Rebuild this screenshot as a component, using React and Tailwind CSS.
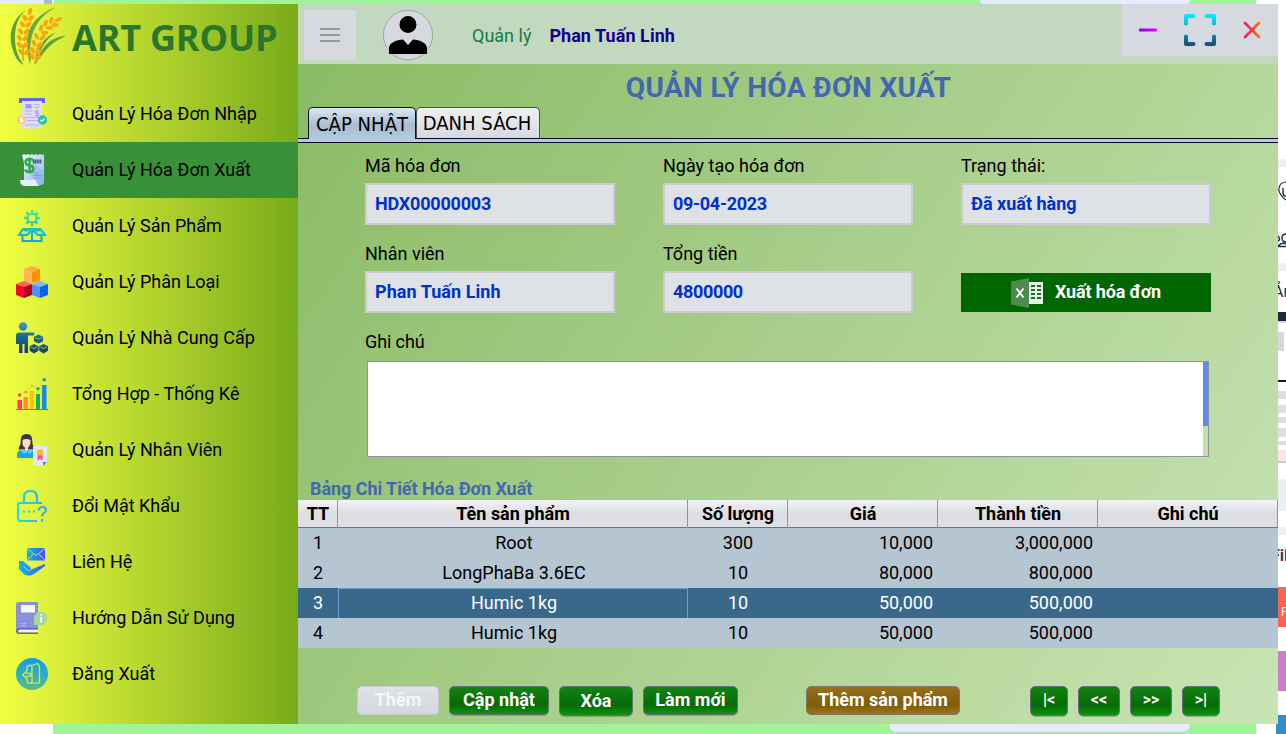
import React from 'react';

function Logo() {
  const ear = (pts, rot) =>
    pts.map(([x, y], i) => (
      <g key={i} transform={`translate(${x} ${y}) rotate(${rot})`} fill="#fca30f">
        <ellipse cx="-3" cy="0" rx="2" ry="3.5" transform="rotate(-38 -3 0)" />
        <ellipse cx="3" cy="0" rx="2" ry="3.5" transform="rotate(38 3 0)" />
      </g>
    ));
  return (
    <svg width="58" height="60" viewBox="0 0 58 60" className="shrink-0">
      <path d="M16 4C3 12-3 28 3 44c2 7 5 12 11 15C7 50 5 42 5 31 5 20 8 11 16 4Z" fill="#5f9e3c" />
      <path d="M46 1C28 8 17 20 17 37c0 8 1 14 3 21 2-8-1-14 1-23C23 21 31 9 46 1Z" fill="#6fa644" />
      <path d="M46 26C35 31 26 41 25 58c4-13 10-24 21-32Z" fill="#5f9e3c" />
      <path d="M56 30C40 31 31 41 26 58c8-13 15-22 30-28Z" fill="#5f9e3c" />
      <path d="M13 38v17" stroke="#e58b1b" strokeWidth="1.3" />
      <path d="M28 38l-3 20" stroke="#e58b1b" strokeWidth="1.3" />
      {ear([[18, 12], [15.5, 18.5], [13.5, 25.5], [12.5, 32], [12.5, 39], [14, 46]], 2)}
      <ellipse cx="20" cy="5.500" rx="2" ry="3.7" transform="rotate(14 20 5.500)" fill="#fca30f" />
      {ear([[43, 16.5], [37.5, 19.5], [33, 24.5]], 52)}
      {ear([[29.5, 31], [27, 38], [26, 45], [25, 51]], 14)}
      <ellipse cx="48.500" cy="13.500" rx="2" ry="3.7" transform="rotate(68 48.500 13.500)" fill="#fca30f" />
    </svg>
  );
}

const icons = {
  importBill: (
    <>
      <path d="M3 0h26v5H3z" fill="#6563f0" />
      <path d="M6 3h20v28l-2-1.500-2 1.500-2-1.500-2 1.500-2-1.500-2 1.500-2-1.500-2 1.500-2-1.500-2 1z" fill="#dedcfb" />
      <path d="M9.500 6h6v4.500h-6z" fill="#a59cf5" />
      <path d="M18 6.500h5M18 9.500h5M9 13h7M9 16h7M9 19.500h14M11 22.500h11M9 27h14" stroke="#b7b0f7" strokeWidth="1" />
      <path d="M22.500 13h-3v2h3v2.500h-3.500M21 12v7" stroke="#a59cf5" fill="none" />
      <circle cx="5.500" cy="22" r="4.500" fill="#fdc98a" />
      <path d="M7 20.300H4.500V22h2.300v1.700H4M5.600 19.500v5" stroke="#fff" fill="none" />
      <circle cx="26.500" cy="22" r="4.700" fill="#2ec4a2" />
      <path d="M24.500 22l1.500 1.300 2.500-2.300" stroke="#fff" strokeWidth="1.200" fill="none" />
    </>
  ),
  exportBill: (
    <>
      <defs>
        <linearGradient id="paper" x1="0" y1="0" x2="1" y2="1">
          <stop offset="0" stopColor="#eef4fd" /><stop offset="1" stopColor="#93b8ee" />
        </linearGradient>
      </defs>
      <path d="M6 1l2-1 2 1 2-1 2 1 2-1 2 1 2-1 2 1 2-1 2 1 2-1v28q0 3-4 3H8V9z" fill="url(#paper)" />
      <path d="M12 18l11 12h5V18L17 7z" fill="#86aef0" opacity=".45" />
      <path d="M4 26h16q0 5 4 6H8q-4-1-4-6z" fill="#e5eefb" />
      <path d="M17 7.500h9" stroke="#39456b" strokeWidth="4" strokeDasharray="1.200 .6" />
      <path d="M17.500 7q-1-2-4-2-4 0-4 3t4 3.500 4 3.500-4 3q-3.500 0-4.500-2.500M13.500 3.500v16" stroke="#31a844" strokeWidth="2.400" fill="none" />
      <path d="M18 19h5M18 21.500h8M18 24h7" stroke="#6e91dc" strokeWidth=".8" />
    </>
  ),
  product: (
    <>
      <defs>
        <linearGradient id="prod" x1="0" y1="0" x2="0" y2="32" gradientUnits="userSpaceOnUse">
          <stop offset="0" stopColor="#2ee8a0" /><stop offset=".6" stopColor="#17bfc9" /><stop offset="1" stopColor="#0fa5ec" />
        </linearGradient>
      </defs>
      <g stroke="url(#prod)" fill="none">
        <circle cx="16" cy="8" r="4.600" strokeWidth="2" />
        <circle cx="16" cy="8" r="6.600" strokeWidth="2.600" strokeDasharray="2.400 2.784" strokeDashoffset="1.200" />
        <path d="M7 19h17.500l4.500 6h-7l-5.500-5-5.500 5H3zM6.500 25v6h19v-6M16 20v11" strokeWidth="2.100" />
        <path d="M7.500 20.500l7 .5M24.500 20.500l-7 .5" strokeWidth="1.300" />
      </g>
    </>
  ),
  category: (
    <>
      <path d="M16 0l8 3-8 3.500L8 3z" fill="#ffa944" />
      <path d="M8 3l8 3.500V17l-8-2z" fill="#ffb459" />
      <path d="M24 3l-8 3.500V17l8-2z" fill="#ff8f00" />
      <path d="M8 15l8 3-8 3-8-3z" fill="#ff6166" />
      <path d="M0 18l8 3v11l-8-3z" fill="#ff0226" />
      <path d="M16 18l-8 3v11l8-3z" fill="#b00521" />
      <path d="M24 15l8 3-8 3-8-3z" fill="#84b7ff" />
      <path d="M16 18l8 3v11l-8-3z" fill="#4a90ff" />
      <path d="M32 18l-8 3v11l8-3z" fill="#0864e8" />
    </>
  ),
  supplier: (
    <>
      <defs>
        <linearGradient id="sup" x1="0" y1="0" x2="0" y2="32" gradientUnits="userSpaceOnUse">
          <stop offset="0" stopColor="#3aa0d5" /><stop offset=".5" stopColor="#1d6287" /><stop offset="1" stopColor="#1c3d6b" />
        </linearGradient>
      </defs>
      <g fill="url(#sup)">
        <circle cx="7" cy="4.500" r="4.200" />
        <path d="M3 10.500h14q1.500 0 1.500 1.500t-1.500 1.500h-5V31H8.500V22h-2v9H3V22H0V13.500q0-3 3-3z" />
        <path d="M22.500 12.500l4.500 2.200v4.600l-4.500 2.200-4.500-2.200v-4.600zM18 22l4.500 2.200v4.600L18 31.500l-4.300-2.700v-4.600zM27.500 22l4.500 2.200v4.600l-4.500 2.700-4.300-2.700v-4.600z" />
      </g>
      <path d="M19 15.500l3.500 1.600 3.500-1.600M15 25l3 1.600 3-1.600M24.500 25l3 1.600 3-1.600" stroke="#bfdc3c" strokeWidth=".8" fill="none" />
    </>
  ),
  stats: (
    <>
      <path d="M1.500 22h4.500v9H1.500z" fill="#fb3f5c" />
      <path d="M7.500 19h4.500v12H7.500z" fill="#fd9135" />
      <path d="M13.700 13h4v18h-4z" fill="#fec308" />
      <path d="M20 16h4v15h-4z" fill="#0eb35e" />
      <path d="M26 7h4.500v24H26z" fill="#0f8bf0" />
      <path d="M3.500 17l6.500-3 6-6.500 6 3 6-9" stroke="#b8c9cf" fill="none" strokeWidth=".9" />
      <circle cx="3.500" cy="17" r="1.700" fill="#fb3f5c" /><circle cx="9.800" cy="14" r="1.600" fill="#fd9135" />
      <circle cx="16" cy="8" r="1.600" fill="#fec308" /><circle cx="22" cy="10.700" r="1.600" fill="#0eb35e" />
      <circle cx="28.300" cy="1.700" r="1.700" fill="#0f8bf0" />
      <path d="M0 31.500h32" stroke="#3b8fb5" />
    </>
  ),
  staff: (
    <>
      <path d="M4.500 14C4.500 3 5 0 10.500 0S16.500 3 16.500 14q-6 3-12 0z" fill="#3c3640" />
      <path d="M5 10q-3 3-2 5.500h5zM16 10q3 3 2 5.500h-5z" fill="#3c3640" />
      <path d="M1 24v-4q1-4 6-5h7q5 1 5 5v4z" fill="#18a6e6" />
      <path d="M6.500 6q4-2 8 0v3q-1 4-2.500 4.500V16l-1.500 2L9 16v-2.500Q6.500 12.500 6.500 9z" fill="#fcd9cb" />
      <path d="M4 16l4-1 3 3-3 2zM18 16l-4-1-3 3 3 2z" fill="#5fd0f5" />
      <path d="M17 12h14v16l-4 4H17z" fill="#dfe9fb" />
      <path d="M31 28l-4 4v-4z" fill="#4c8ad8" />
      <path d="M21.500 21h5v5.500l-2.500-1.500-2.500 1.500z" fill="#fc4fa1" />
      <circle cx="24" cy="18.500" r="3.300" fill="#fdb913" />
    </>
  ),
  password: (
    <>
      <defs>
        <linearGradient id="pwd" x1="0" y1="0" x2="32" y2="0" gradientUnits="userSpaceOnUse">
          <stop offset="0" stopColor="#12e6e6" /><stop offset="1" stopColor="#3f9ef5" />
        </linearGradient>
      </defs>
      <g stroke="url(#pwd)" fill="none" strokeWidth="2.200">
        <path d="M8 13V7.500Q8 1 14.500 1T21 7.500V13M26 13H4q-2 0-2 2v13q0 3 3 3h16" />
        <path d="M22.500 20.500q.5-3.500 4-3.500t3.500 3q0 2-2 3t-2 3.500M26 29v2.500" />
        <path d="M7 21.500h2M12 21.500h2M17 21.500h2" />
      </g>
    </>
  ),
  contact: (
    <>
      <defs>
        <linearGradient id="con" x1="0" y1="0" x2="1" y2="0">
          <stop offset="0" stopColor="#08b6fb" /><stop offset="1" stopColor="#4a51fb" />
        </linearGradient>
      </defs>
      <path d="M11 2h18v12.500H11z" fill="url(#con)" />
      <path d="M11 2.500l9 7 9-7M11 14l6.500-6M29 14l-6.500-6" stroke="#d5ea3b" strokeWidth=".9" fill="none" />
      <path d="M3 15h4l7 6q2 2 0 3l15-6v2L18 28q-6 3-10 0l-5-5z" fill="url(#con)" />
      <path d="M7.500 20l5 5 3-1.500" stroke="#d5ea3b" strokeWidth=".9" fill="none" />
    </>
  ),
  guide: (
    <>
      <path d="M2.500 0H22v26H3q-3 0-3 3V3q0-3 2.500-3z" fill="#8a90dc" />
      <path d="M0 29q0-3 3-3h19v1.500H4q-2 0-2 1.700t2 1.300h18V32H3q-3 0-3-3z" fill="#5e63c0" />
      <path d="M3 28h19v2H3z" fill="#f3f1fb" />
      <path d="M5 3h14v7.500H5z" fill="#f7f5fc" />
      <path d="M5 21.500h5M5 23.500h5" stroke="#f0b87a" strokeWidth=".8" />
      <path d="M18 23v-6a6.700 6.700 0 1 1 6 6.200z" fill="#a2d99b" />
      <path d="M25 15v5.500M25 12v1.500" stroke="#fff" strokeWidth="2" />
    </>
  ),
  logout: (
    <>
      <defs>
        <linearGradient id="out" x1="0" y1="0" x2="0" y2="1">
          <stop offset="0" stopColor="#0d9df5" /><stop offset="1" stopColor="#57bd8a" />
        </linearGradient>
      </defs>
      <circle cx="16" cy="16" r="16" fill="url(#out)" />
      <path d="M16 7.500h-3q-2 0-2 2V13M16 25h-3q-2 0-2-2v-2.500" fill="none" stroke="#cfe84a" strokeWidth="1.300" />
      <path d="M16 7.500l5.500-2Q23.500 8 23.500 9v14q0 2.200-2 2.200H16zM6.500 16.700l4-3.400v2h4v2.900h-4v2z" fill="none" stroke="#cfe84a" strokeWidth="1.300" />
    </>
  ),
};

const menu = [
  ['importBill', 'Quản Lý Hóa Đơn Nhập'],
  ['exportBill', 'Quản Lý Hóa Đơn Xuất'],
  ['product', 'Quản Lý Sản Phẩm'],
  ['category', 'Quản Lý Phân Loại'],
  ['supplier', 'Quản Lý Nhà Cung Cấp'],
  ['stats', 'Tổng Hợp - Thống Kê'],
  ['staff', 'Quản Lý Nhân Viên'],
  ['password', 'Đổi Mật Khẩu'],
  ['contact', 'Liên Hệ'],
  ['guide', 'Hướng Dẫn Sử Dụng'],
  ['logout', 'Đăng Xuất'],
];

function Sidebar() {
  return (
    <aside className="flex h-full w-[298px] shrink-0 flex-col bg-linear-to-r from-[#f1ff41] to-[#78ab1a]">
      <div className="flex h-[82px] items-start gap-1 pl-[10px] pt-[2px]">
        <Logo />
        <div className="pt-[7px] font-['Open_Sans',sans-serif] text-[36px] leading-[50px] font-bold tracking-[-0.2px] whitespace-nowrap text-[#2c762b]">ART GROUP</div>
      </div>
      <nav className="flex flex-col">
        {menu.map(([icon, label], i) => (
          <a key={label} className={`flex h-14 items-center gap-6 pl-4 text-[18px] ${i === 1 ? 'bg-[#389137]' : ''}`}>
            <svg width="32" height="32" viewBox="0 0 32 32" className="shrink-0">{icons[icon]}</svg>
            <span className="pb-[2px] whitespace-nowrap">{label}</span>
          </a>
        ))}
      </nav>
    </aside>
  );
}

function Header() {
  return (
    <header className="flex h-[60px] shrink-0 items-start bg-[#c2d9bf]">
      <button className="mt-[6px] ml-[6px] flex h-[50px] w-[52px] items-center justify-center bg-[#d6d9df]">
        <svg width="20" height="14" viewBox="0 0 20 14"><path d="M0 1h20M0 7h20M0 13h20" stroke="#999" strokeWidth="2" /></svg>
      </button>
      <svg width="50" height="50" viewBox="0 0 50 50" className="mt-[6px] ml-[27px]">
        <circle cx="25" cy="25" r="24.600" fill="#d6d9df" stroke="#8d9092" strokeWidth=".7" />
        <circle cx="25" cy="14.500" r="8.500" />
        <path d="M6 44v-6c0-5 8-8.500 14-8.500l5 5.500 5-5.500c6 0 14 3.500 14 8.500v6z" />
      </svg>
      <div className="flex h-[62px] items-center gap-[18px] pl-[39px] text-[18px] whitespace-nowrap">
        <span className="text-[#157c46]">Quản lý</span>
        <span className="font-bold tracking-[0.05px] text-[#150091]">Phan Tuấn Linh</span>
      </div>
      <div className="ml-auto flex h-[52px] w-[156px] items-center bg-[#d6d9df]">
        <svg width="156" height="52" viewBox="0 0 156 52">
          <defs>
            <linearGradient id="min" x1="0" x2="1" y1="0" y2="0"><stop offset="0" stopColor="#7a00fb" /><stop offset="1" stopColor="#f500fb" /></linearGradient>
            <linearGradient id="max" x1="0" x2="0" y1="10" y2="42" gradientUnits="userSpaceOnUse"><stop offset="0" stopColor="#00f2ff" /><stop offset="1" stopColor="#19487a" /></linearGradient>
            <linearGradient id="cls" x1="122" x2="138" y1="0" y2="0" gradientUnits="userSpaceOnUse"><stop offset="0" stopColor="#f0106d" /><stop offset="1" stopColor="#ff7300" /></linearGradient>
          </defs>
          <rect x="17" y="24.500" width="18" height="3" rx="1" fill="url(#min)" />
          <path d="M64 19.500V12h7.500M84.500 12H92v7.500M92 32.500V40h-7.500M71.500 40H64v-7.500" fill="none" stroke="url(#max)" strokeWidth="4" strokeLinecap="round" strokeLinejoin="round" />
          <path d="M123 19l14 14M137 19l-14 14" stroke="url(#cls)" strokeWidth="2.600" strokeLinecap="round" />
        </svg>
      </div>
    </header>
  );
}

function Field({ label, value, tracking = '' }) {
  return (
    <div className="flex w-[250px] flex-col">
      <label className="flex h-[34px] items-center pb-[2px] text-[18px]">{label}</label>
      <div className={`flex h-[42px] items-center border-2 border-[#cccbce] bg-[#dee1e6] pb-[2px] pl-2 text-[18px] font-bold text-[#0031cf] ${tracking}`}>{value}</div>
    </div>
  );
}

const cols = 'grid grid-cols-[40px_350px_100px_150px_160px_180px]';
const rows = [
  ['1', 'Root', '300', '10,000', '3,000,000'],
  ['2', 'LongPhaBa 3.6EC', '10', '80,000', '800,000'],
  ['3', 'Humic 1kg', '10', '50,000', '500,000'],
  ['4', 'Humic 1kg', '10', '50,000', '500,000'],
];

function Table() {
  return (
    <div className="flex flex-col text-[18px]">
      <div className={`${cols} h-7 border-b border-[#6c737c] bg-linear-to-b from-[#f2f3f5] via-[#dcdee3] via-50% to-[#dfe1e6] font-bold`}>
        {['TT', 'Tên sản phẩm', 'Số lượng', 'Giá', 'Thành tiền', 'Ghi chú'].map((h) => (
          <div key={h} className="flex items-center justify-center border-r border-[#8e949c] pb-1 pl-px">{h}</div>
        ))}
      </div>
      {rows.map((r, i) => (
        <div key={i} className={`${cols} h-[30px] items-center text-center ${i === 2 ? 'bg-[#39698a] text-white' : 'bg-[#b6c5d2]'}`}>
          <div className="pb-[2px]">{r[0]}</div>
          <div className={`flex h-full items-center justify-center border pb-[2px] pl-[2px] ${i === 2 ? 'border-[#6a9fd4]' : 'border-transparent'}`}>{r[1]}</div>
          <div className="pb-[2px]">{r[2]}</div>
          <div className="pr-[5px] pb-[2px] text-right">{r[3]}</div>
          <div className="pr-[5px] pb-[2px] text-right">{r[4]}</div>
          <div />
        </div>
      ))}
    </div>
  );
}

const green = 'border-[#66707a] bg-linear-to-b from-[#128312] via-[#066a06] via-65% to-[#0d930d] shadow-[0_1px_0_rgba(70,80,70,0.35)]';

function Btn({ className, children }) {
  return (
    <button className={`flex shrink-0 items-center justify-center rounded-[5px] border pb-[2px] font-bold whitespace-nowrap text-white ${className}`}>{children}</button>
  );
}

function Main() {
  return (
    <main className="flex min-h-0 flex-1 flex-col bg-[linear-gradient(124deg,#8abb65,#c9e4b5)]">
      <h1 className="h-[43px] pl-[1px] text-center text-[28px] leading-[48px] font-bold tracking-[0.33px] text-[#4368b1]">QUẢN LÝ HÓA ĐƠN XUẤT</h1>
      <div className="flex h-[31px] shrink-0 items-end pl-[10px] font-['DejaVu_Sans_Condensed','DejaVu_Sans',sans-serif] text-[20px] font-stretch-[90%] whitespace-nowrap">
        <div className="z-10 -mb-px flex h-[32px] w-[108px] shrink-0 items-center justify-center rounded-t-[5px] border border-b-0 border-[#0b1030] bg-linear-to-b from-[#dfe8f0] via-[#a9bdd0] via-55% to-[#b3c9de] tracking-[0.05px]">CẬP NHẬT</div>
        <div className="flex h-[31px] w-[124px] shrink-0 items-center justify-center rounded-t-[5px] border border-b-0 border-[#4a5058] bg-linear-to-b from-[#eff0f2] to-[#d6d9df] pr-[2px]">DANH SÁCH</div>
      </div>
      <div className="h-[5px] shrink-0 border-y border-[#060a20] bg-[#b5cbe4]" />
      <section className="grid shrink-0 grid-cols-[250px_250px_250px] gap-x-12 gap-y-3 pt-[6px] pl-[67px]">
        <Field label="Mã hóa đơn" value="HDX00000003" tracking="tracking-[-0.2px]" />
        <Field label="Ngày tạo hóa đơn" value="09-04-2023" tracking="tracking-[-0.3px]" />
        <Field label="Trạng thái:" value="Đã xuất hàng" />
        <Field label="Nhân viên" value="Phan Tuấn Linh" tracking="tracking-[0.05px]" />
        <Field label="Tổng tiền" value="4800000" tracking="tracking-[-0.35px]" />
        <button className="mt-9 flex h-[39px] items-center justify-center gap-3 bg-[#006600] text-[18px] font-bold text-white">
          <svg width="32" height="32" viewBox="0 0 32 32">
            <path d="M0 4.500L18 1v30L0 27.500z" fill="#4d8c50" />
            <path d="M5.500 11.500l7 9M12.500 11.500l-7 9" stroke="#fff" strokeWidth="1.800" />
            <path d="M18 5h14v22H18z" fill="#e9f2e9" />
            <path d="M20 9h4M26 9h4M20 13h4M26 13h4M20 17h4M26 17h4M20 21h4M26 21h4" stroke="#1a701c" strokeWidth="2" />
          </svg>
          <span className="pb-[2px] tracking-[-0.15px]">Xuất hóa đơn</span>
        </button>
      </section>
      <div className="flex shrink-0 flex-col pt-3 pl-[67px]">
        <label className="flex h-[34px] items-center pb-[2px] text-[18px] tracking-[-0.1px]">Ghi chú</label>
        <div className="mt-[2px] ml-[2px] flex h-[96px] w-[842px] justify-end border border-[#8f949c] bg-white">
          <div className="h-full w-[5px] bg-[#c4dfae]"><div className="h-[64px] bg-[#5f8ce8]" /></div>
        </div>
      </div>
      <h2 className="h-[43px] shrink-0 pt-[19px] pl-[12px] text-[18px] leading-[25px] font-bold tracking-[-0.06px] text-[#4368b1]">Bảng Chi Tiết Hóa Đơn Xuất</h2>
      <Table />
      <div className="flex items-start gap-[10px] pt-[38px] pl-[59px] text-[18px]">
        <Btn className="h-[29px] w-[82px] border-[#c3c8cd] bg-linear-to-b from-[#dfe2e6] to-[#d3d7df] text-white/75">Thêm</Btn>
        <Btn className={`h-[29px] w-[100px] ${green}`}>Cập nhật</Btn>
        <Btn className={`h-[30px] w-[74px] ${green}`}>Xóa</Btn>
        <Btn className={`h-[29px] w-[95px] ${green}`}>Làm mới</Btn>
        <Btn className="ml-[58px] h-[29px] w-[154px] border-[#7d776c] bg-linear-to-b from-[#97701b] via-[#7f5c0c] via-65% to-[#9c7415]">Thêm sản phẩm</Btn>
        <Btn className={`ml-[60px] h-[30px] w-[38px] text-[16px] ${green}`}>|&lt;</Btn>
        <Btn className={`h-[30px] w-[42px] text-[16px] ${green}`}>&lt;&lt;</Btn>
        <Btn className={`h-[30px] w-[42px] text-[16px] ${green}`}>&gt;&gt;</Btn>
        <Btn className={`h-[30px] w-[38px] text-[16px] ${green}`}>&gt;|</Btn>
      </div>
    </main>
  );
}

function Backdrop() {
  return (
    <div className="flex w-2 shrink-0 flex-col overflow-hidden bg-white">
      <svg width="8" height="720" viewBox="0 0 8 720">
        <path d="M0 155h8v8H0zM0 259h8v8H0zM0 475h8v32H0zM0 523h8v8H0z" fill="#edf0f3" />
        <path d="M8 178Q2 178 1 184t7 12" fill="none" stroke="#1d2b4a" strokeWidth="1.200" />
        <path d="M5 184v5q0 3 3 3M8 230q-4 0-4 4t4 4M0 232q3 4 0 5M0 242q4-4 8-2M0 242.500h8" fill="none" stroke="#1d2b4a" strokeWidth="1.400" />
        <path d="M0 308h8v9H0z" fill="#202840" />
        <path d="M0 317h8v2H0zM0 328h6v19H0z" fill="#d6d9e2" />
        <path d="M0 376h8v2H0z" fill="#15151b" />
        <path d="M0 387h8v8H0zM0 401h8v8H0zM0 413h8v6H0zM0 424h8v9H0zM0 437h8v4H0z" fill="#dcdee0" />
        <path d="M0 446h8v11H0z" fill="#f9e6e6" />
        <path d="M0 457h8v2H0z" fill="#c9cacf" />
        <path d="M0 583h8v40H0z" fill="#fc634e" />
        <path d="M0 647h8v40H0z" fill="#cf7dca" />
        <path d="M0 711h8v9H0z" fill="#348bcd" />
        <text x="-5" y="293" fontSize="16" fill="#1d2b4a">Ản</text>
        <text x="-7" y="557" fontSize="16" fontWeight="700" fill="#2c3b55">Fil</text>
        <text x="3" y="612" fontSize="12" fill="#fff">P</text>
      </svg>
    </div>
  );
}

export default function App() {
  return (
    <div className="flex h-[734px] w-[1286px] flex-col overflow-hidden bg-white font-[Roboto,sans-serif] text-black">
      <div className="flex h-1 shrink-0">
        <div className="w-11 bg-[#e4ecfa]" />
        <div className="w-2 bg-[#a9b7cf]" />
        <div className="w-[2px] bg-[#e4ecfa]" />
        <div className="flex w-[1202px] justify-end bg-[#9ef497] pr-[66px]"><div className="h-1 w-[210px] rounded-b-[4px] bg-[#e4edfc]" /></div>
      </div>
      <div className="flex h-[720px] shrink-0">
        <Sidebar />
        <div className="flex w-[980px] shrink-0 flex-col">
          <Header />
          <Main />
        </div>
        <Backdrop />
      </div>
      <div className="flex h-[10px] shrink-0 pl-[53px]">
        <div className="flex w-[1203px] justify-end border-r border-[#cfd8d0] bg-[#9ef497] pr-[65px]"><div className="h-[9px] w-[301px] rounded-b-[8px] border-b border-[#b9cfc8] bg-[#e4edfc]" /></div>
        <div className="ml-[20px] flex-1 bg-[#348bcd]" />
      </div>
    </div>
  );
}
